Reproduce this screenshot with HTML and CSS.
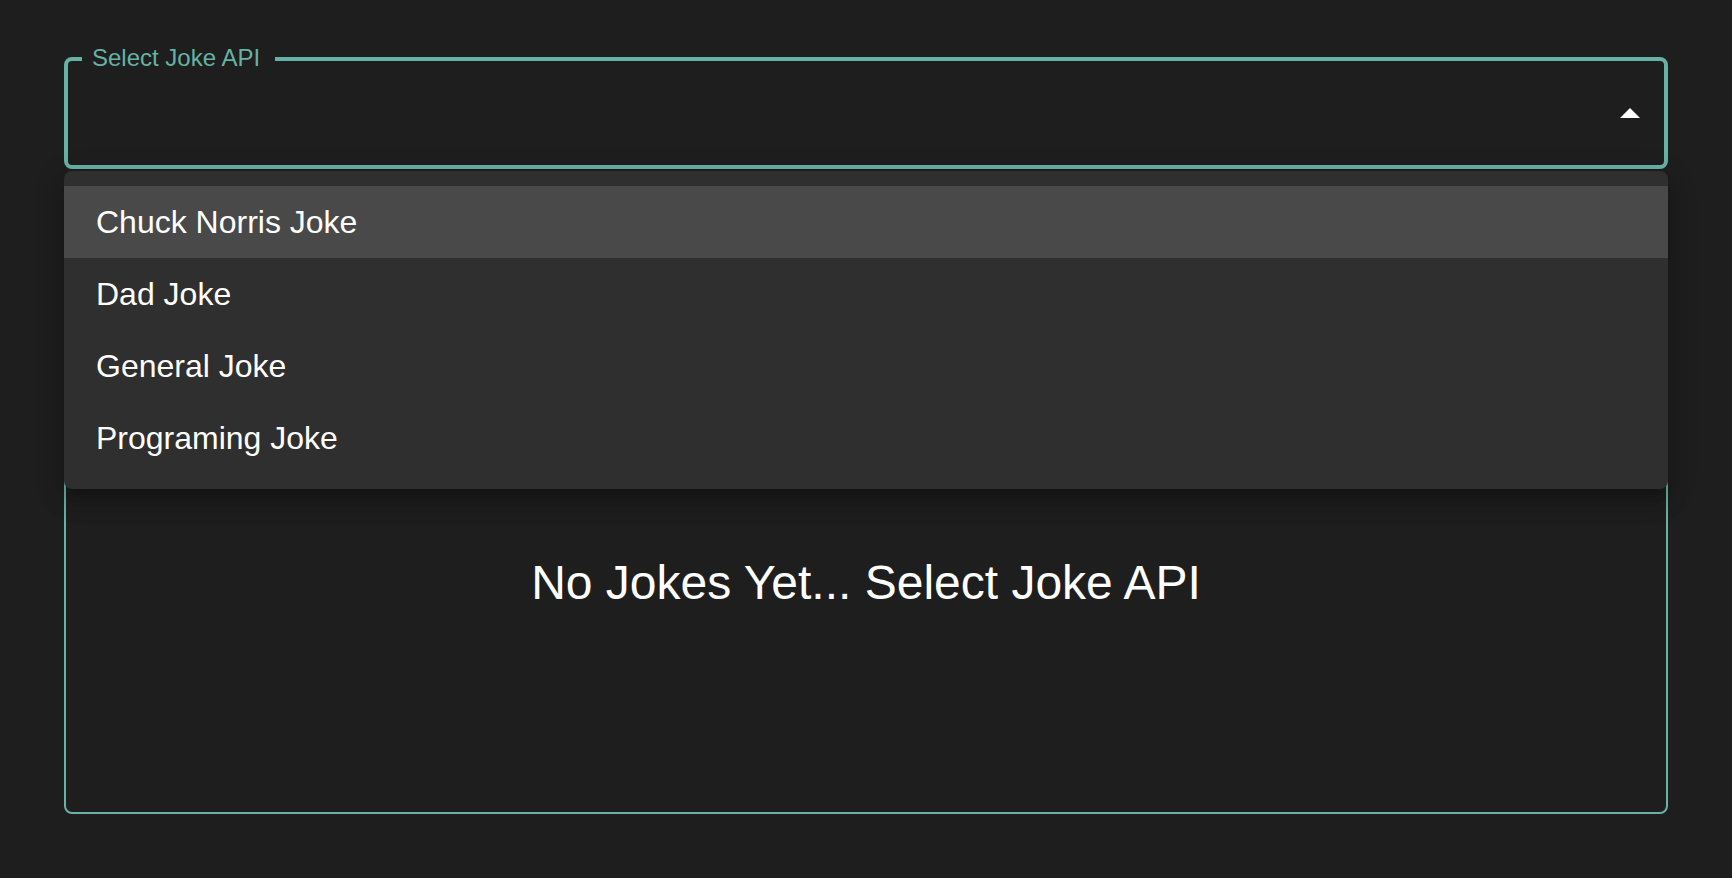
FILE: index.html
```html
<!DOCTYPE html>
<html lang="en">
<head>
<meta charset="utf-8">
<title>Jokes</title>
<link rel="stylesheet" href="styles.css">
</head>
<body>
<main class="page">
  <div class="select-wrap">
    <div class="select">
      <span class="select-label">Select Joke API</span>
      <svg class="select-arrow" width="20" height="10" viewBox="0 0 20 10" aria-hidden="true"><path d="M0 10 L10 0 L20 10 Z" fill="#ffffff"/></svg>
    </div>
    <ul class="menu">
      <li class="menu-item is-active">Chuck Norris Joke</li>
      <li class="menu-item">Dad Joke</li>
      <li class="menu-item">General Joke</li>
      <li class="menu-item">Programing Joke</li>
    </ul>
  </div>
  <section class="card">
    <h2 class="empty">No Jokes Yet... Select Joke API</h2>
  </section>
</main>
</body>
</html>
```

FILE: styles.css
```css
* { box-sizing: border-box; }
html, body {
  margin: 0;
  background: #1e1e1e;
  color: #ffffff;
  font-family: "Liberation Sans", Arial, Helvetica, sans-serif;
}
.page {
  padding: 57px 64px 0;
}
.select-wrap {
  position: relative;
}
.select {
  position: relative;
  height: 112px;
  border: 4px solid #66b2a5;
  border-radius: 8px;
  display: flex;
  align-items: center;
  justify-content: flex-end;
  padding-right: 24px;
}
.select-label {
  position: absolute;
  left: 14px;
  top: -15px;
  padding: 0 15px 0 10px;
  background: #1e1e1e;
  color: #66b2a5;
  font-size: 24px;
  line-height: 24px;
}
.select-arrow {
  display: block;
}
.menu {
  position: absolute;
  left: 0;
  right: 0;
  top: calc(100% + 2px);
  margin: 0;
  padding: 15px 0;
  list-style: none;
  background: #2f2f2f;
  border-radius: 8px;
  z-index: 2;
  box-shadow: 0 10px 10px -6px rgba(0,0,0,0.2), 0 16px 20px 2px rgba(0,0,0,0.14), 0 6px 28px 4px rgba(0,0,0,0.12);
}
.menu-item {
  height: 72px;
  padding: 0 32px;
  display: flex;
  align-items: center;
  font-size: 32px;
  color: #ffffff;
}
.menu-item.is-active {
  background: #494949;
}
.card {
  margin-top: 64px;
  height: 581px;
  border: 2px solid #66b2a5;
  border-radius: 8px;
  padding-top: 319px;
}
.empty {
  margin: 0;
  text-align: center;
  font-size: 48px;
  line-height: 58px;
  font-weight: 400;
}
```
